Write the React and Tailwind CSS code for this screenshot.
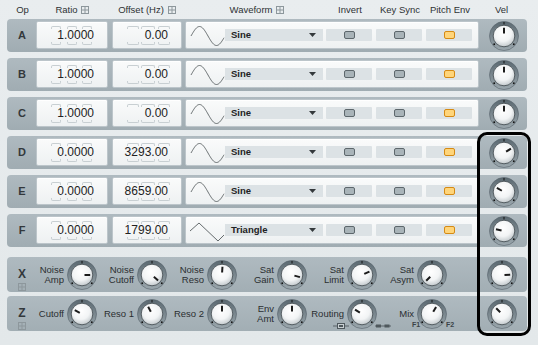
import React from "react";

function Knob({ angle = 0 }) {
  const r = (angle * Math.PI) / 180;
  const s = Math.sin(r);
  const c = Math.cos(r);
  const pt = (a, rr) => {
    const t = (a * Math.PI) / 180;
    return [15 + rr * Math.sin(t), 15 - rr * Math.cos(t)];
  };
  const [lx, ly] = pt(-130, 12.8);
  const [rx, ry] = pt(130, 12.8);
  return (
    <svg width="30" height="30" viewBox="0 0 30 30" className="block shrink-0">
      <defs>
        <linearGradient id="kring" x1="0" y1="0" x2="0" y2="1">
          <stop offset="0" stopColor="#5a6870" />
          <stop offset="1" stopColor="#9ca8ae" />
        </linearGradient>
        <radialGradient id="kcap" cx="0.45" cy="0.35" r="0.72">
          <stop offset="0" stopColor="#ffffff" />
          <stop offset="0.55" stopColor="#f2f4f5" />
          <stop offset="1" stopColor="#b6bec2" />
        </radialGradient>
      </defs>
      <circle cx="15" cy="15" r="14.5" fill="url(#kring)" stroke="#55626a" strokeWidth="0.6" />
      <circle cx="15" cy="15" r="10.8" fill="url(#kcap)" stroke="#3c454a" strokeWidth="0.8" />
      <line x1="15" y1="1" x2="15" y2="3.4" stroke="#111" strokeWidth="1" />
      <circle cx={lx} cy={ly} r="0.9" fill="#111" />
      <circle cx={rx} cy={ry} r="0.9" fill="#111" />
      <line
        x1={15 + 2.5 * s}
        y1={15 - 2.5 * c}
        x2={15 + 8.2 * s}
        y2={15 - 8.2 * c}
        stroke="#1b1b1b"
        strokeWidth="2"
      />
    </svg>
  );
}

function GridIcon() {
  return (
    <svg width="8" height="8" viewBox="0 0 8 8" className="block shrink-0">
      <rect x="0.5" y="0.5" width="7" height="7" fill="none" stroke="#8d979c" />
      <path d="M4 1v6M1 4h6" stroke="#8d979c" />
    </svg>
  );
}

function Wave({ type }) {
  let pts = "";
  if (type === "Triangle") {
    pts = "1,14 10,6 29,24 35,18";
  } else {
    const arr = [];
    for (let x = 2; x <= 35; x += 0.5) {
      const y = 14 - 9.5 * Math.sin((2 * Math.PI * (x - 2)) / 34);
      arr.push(`${x.toFixed(1)},${y.toFixed(2)}`);
    }
    pts = arr.join(" ");
  }
  return (
    <svg width="36" height="26" viewBox="0 0 36 26" className="block shrink-0">
      <polyline points={pts} fill="none" stroke="#555b5e" strokeWidth="0.9" />
    </svg>
  );
}

function Brackets({ widths, gaps, top }) {
  return (
    <div className="flex">
      {widths.map((w, i) => (
        <div
          key={i}
          style={{ width: w, marginLeft: i === 0 ? 0 : gaps[i - 1] }}
          className={
            top
              ? "h-[3px] border-t border-x border-[#c8cfd2] rounded-t-[2px]"
              : "h-[3px] border-b border-x border-[#c8cfd2] rounded-b-[2px]"
          }
        />
      ))}
    </div>
  );
}

const cellCls =
  "h-[28px] rounded-[2px] border border-[#bcc5ca] bg-gradient-to-b from-[#fafbfb] to-[#eef1f2] shadow-[inset_0_1px_0_#ffffff]";

function NumCell({ value, w, pr, bw, bg, bpr }) {
  return (
    <div className={`${cellCls} flex flex-col items-end justify-center`} style={{ width: w, paddingRight: pr }}>
      <div style={{ marginRight: bpr }} className="mb-[1px]">
        <Brackets widths={bw} gaps={bg} top />
      </div>
      <div className="h-[11px] leading-[11px] text-[12px] text-[#222]">{value}</div>
      <div style={{ marginRight: bpr }} className="mt-[1px]">
        <Brackets widths={bw} gaps={bg} />
      </div>
    </div>
  );
}

function Toggle({ on }) {
  return (
    <div className="w-[46px] h-[12px] bg-[#dce2e5] rounded-[1px] flex items-center justify-center">
      <div
        className={
          on
            ? "w-[11px] h-[8px] rounded-[2px] border border-[#d58a14] bg-[#ffd57a]"
            : "w-[11px] h-[8px] rounded-[2px] border border-[#5d676c] bg-[#a9b4b9]"
        }
      />
    </div>
  );
}

const ops = [
  { l: "A", ratio: "1.0000", offset: "0.00", wave: "Sine", vel: 0 },
  { l: "B", ratio: "1.0000", offset: "0.00", wave: "Sine", vel: 0 },
  { l: "C", ratio: "1.0000", offset: "0.00", wave: "Sine", vel: 0 },
  { l: "D", ratio: "0.0000", offset: "3293.00", wave: "Sine", vel: 58 },
  { l: "E", ratio: "0.0000", offset: "8659.00", wave: "Sine", vel: -60 },
  { l: "F", ratio: "0.0000", offset: "1799.00", wave: "Triangle", vel: -78 },
];

function OpRow({ op }) {
  return (
    <div className="w-[520px] h-[33px] rounded-[4px] bg-gradient-to-b from-[#afbac0] to-[#a0acb2] flex items-start pt-[2px]">
      <div className="w-[29px] h-[28px] flex items-center justify-center font-bold text-[11px] text-[#33383b] pl-[1px]">
        {op.l}
      </div>
      <NumCell value={op.ratio} w={72} pr={13} bw={[10, 10, 10]} bg={[6, 5]} bpr={2} />
      <div className="w-[4px]" />
      <NumCell value={op.offset} w={70} pr={13} bw={[12, 14, 12]} bg={[2, 3]} bpr={-2} />
      <div className="w-[3px]" />
      <div className={`${cellCls} w-[294px] flex items-center pl-[3px]`}>
        <Wave type={op.wave} />
        <div className="w-[98px] h-[12px] bg-[#dce2e5] flex items-center justify-between pl-[6px] pr-[7px]">
          <span className="text-[9.5px] leading-[12px] font-bold text-[#1e2224]">{op.wave}</span>
          <svg width="7" height="4" viewBox="0 0 7 4" className="block">
            <path d="M0 0h7L3.5 4z" fill="#34393c" />
          </svg>
        </div>
        <div className="w-[3px]" />
        <div className="flex gap-[4px]">
          <Toggle />
          <Toggle />
          <Toggle on />
        </div>
      </div>
      <div className="w-[48px] h-[29px] flex items-center justify-center pl-[1px]">
        <Knob angle={op.vel} />
      </div>
    </div>
  );
}

function KnobGroup({ label, angle, first, children }) {
  return (
    <div className={`relative ${first ? "w-[60px]" : "w-[70px]"} h-[35px] flex items-center`}>
      <div className="flex-1 text-right pr-[3px] text-[9.5px] leading-[10px] text-[#2a2e30] whitespace-pre">
        {label}
      </div>
      <Knob angle={angle} />
      {children}
    </div>
  );
}

function SideLabel({ t }) {
  return (
    <div className="w-[30px] h-[35px] flex flex-col items-center pt-[11px] gap-[3px]">
      <div className="font-bold text-[12px] leading-[12px] text-[#33383b]">{t}</div>
      <GridIcon />
    </div>
  );
}

export default function App() {
  return (
    <div className="relative w-[538px] h-[345px] overflow-hidden bg-gradient-to-b from-[#e9edef] to-[#e3e8ea] font-['Liberation_Sans',Arial,sans-serif] text-[#2a2e30]">
      {/* header */}
      <div className="h-[19px] flex items-center pl-[7px] pt-[1px] text-[9.5px] text-[#2e3234]">
        <div className="w-[29px] text-center pl-[2px]">Op</div>
        <div className="w-[72px] flex items-center justify-center gap-[3px]">
          <span>Ratio</span>
          <GridIcon />
        </div>
        <div className="w-[4px]" />
        <div className="w-[70px] flex items-center justify-center gap-[4px]">
          <span>Offset (Hz)</span>
          <GridIcon />
        </div>
        <div className="w-[3px]" />
        <div className="w-[140px] flex items-center justify-center gap-[4px] pl-[4px]">
          <span>Waveform</span>
          <GridIcon />
        </div>
        <div className="w-[50px] text-center">Invert</div>
        <div className="w-[50px] text-center">Key Sync</div>
        <div className="w-[50px] text-center">Pitch Env</div>
        <div className="w-[4px]" />
        <div className="w-[48px] text-center pr-[3px]">Vel</div>
      </div>

      {/* operator rows */}
      <div className="flex flex-col gap-[6px] pl-[7px]">
        {ops.map((op) => (
          <OpRow key={op.l} op={op} />
        ))}
      </div>

      {/* X / Z rows */}
      <div className="flex flex-col gap-[4px] pl-[7px] mt-[10px]">
        <div className="w-[520px] h-[35px] rounded-[4px] bg-gradient-to-b from-[#afbac0] to-[#a2aeb4] flex">
          <SideLabel t="X" />
          <KnobGroup first label={"Noise\nAmp"} angle={90} />
          <KnobGroup label={"Noise\nCutoff"} angle={132} />
          <KnobGroup label={"Noise\nReso"} angle={3} />
          <KnobGroup label={"Sat\nGain"} angle={105} />
          <KnobGroup label={"Sat\nLimit"} angle={65} />
          <KnobGroup label={"Sat\nAsym"} angle={-135} />
          <KnobGroup label="" angle={88} />
        </div>
        <div className="w-[520px] h-[35px] rounded-[4px] bg-gradient-to-b from-[#afbac0] to-[#a2aeb4] flex">
          <SideLabel t="Z" />
          <KnobGroup first label="Cutoff" angle={-62} />
          <KnobGroup label="Reso 1" angle={-28} />
          <KnobGroup label="Reso 2" angle={0} />
          <KnobGroup label={"Env\nAmt"} angle={0} />
          <KnobGroup label="Routing" angle={-58}>
            <svg width="16" height="6" viewBox="0 0 16 6" className="absolute left-[26px] top-[27px]">
              <path d="M0 3h16" stroke="#5a6368" strokeWidth="1" />
              <rect x="4.5" y="0.5" width="7" height="5" fill="#c9d0d3" stroke="#4f585d" />
              <rect x="6" y="2" width="4" height="2" fill="#4f585d" />
            </svg>
            <svg width="16" height="6" viewBox="0 0 16 6" className="absolute left-[68px] top-[27px]">
              <path d="M0 3h16" stroke="#5a6368" strokeWidth="1" />
              <rect x="1" y="1.5" width="5" height="3" fill="#4f585d" />
              <rect x="9.5" y="1.5" width="5" height="3" fill="#4f585d" />
            </svg>
          </KnobGroup>
          <KnobGroup label="Mix" angle={30}>
            <span className="absolute left-[35px] top-[25px] text-[7px] leading-[8px] font-bold text-[#3b4347]">F1</span>
            <span className="absolute left-[69px] top-[25px] text-[7px] leading-[8px] font-bold text-[#3b4347]">F2</span>
          </KnobGroup>
          <KnobGroup label="" angle={-45} />
        </div>
      </div>

      {/* highlight outline */}
      <div className="absolute left-[477px] top-[132px] w-[54px] h-[204px] border-[3px] border-black rounded-[10px]" />
    </div>
  );
}
